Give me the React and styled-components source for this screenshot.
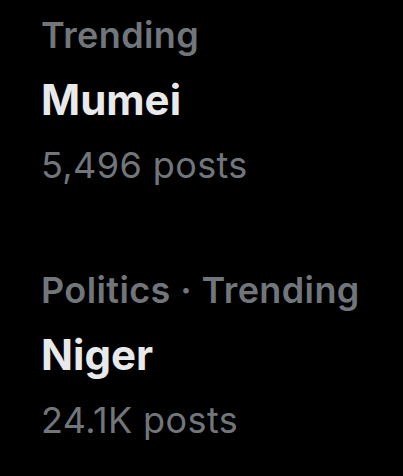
import React from 'react';
import styled, { createGlobalStyle } from 'styled-components';

const GlobalStyle = createGlobalStyle`
  html, body {
    margin: 0;
    padding: 0;
    background: #000;
  }
  body {
    font-family: Inter, "Noto Sans", "DejaVu Sans", sans-serif;
    -webkit-font-smoothing: antialiased;
  }
`;

const Page = styled.div`
  width: 403px;
  height: 476px;
  background: #000;
  padding: 15px 0 0 41px;
  box-sizing: border-box;
  overflow: hidden;
  display: flex;
  flex-direction: column;
  gap: 85px;
`;

const Trend = styled.div`
  display: flex;
  flex-direction: column;
`;

const Category = styled.div`
  color: #71767b;
  font-size: 36px;
  font-weight: 600;
  letter-spacing: 0.4px;
  line-height: 40px;
  white-space: nowrap;
`;

const Title = styled.div`
  color: #e7e9ea;
  font-size: 42px;
  font-weight: 700;
  line-height: 62px;
  margin-top: 14px;
  white-space: nowrap;
`;

const Count = styled.div`
  color: #71767b;
  font-size: 36px;
  font-weight: 400;
  letter-spacing: 0.4px;
  line-height: 40px;
  margin-top: 14px;
  white-space: nowrap;
`;

const trends = [
  { category: 'Trending', name: 'Mumei', posts: '5,496 posts' },
  { category: 'Politics · Trending', name: 'Niger', posts: '24.1K posts' },
];

export default function App() {
  return (
    <>
      <GlobalStyle />
      <Page>
        {trends.map((t) => (
          <Trend key={t.name}>
            <Category>{t.category}</Category>
            <Title>{t.name}</Title>
            <Count>{t.posts}</Count>
          </Trend>
        ))}
      </Page>
    </>
  );
}
